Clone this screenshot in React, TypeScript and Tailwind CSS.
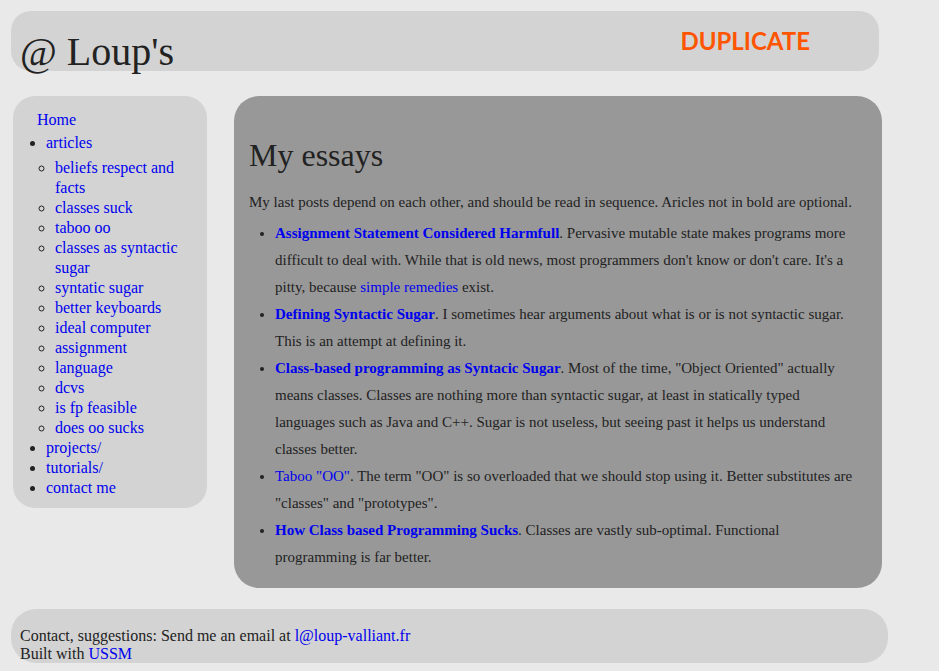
import React from "react";

const serif = { fontFamily: '"Liberation Serif", "Times New Roman", serif' };

const sub = [
  "beliefs respect and facts",
  "classes suck",
  "taboo oo",
  "classes as syntactic sugar",
  "syntatic sugar",
  "better keyboards",
  "ideal computer",
  "assignment",
  "language",
  "dcvs",
  "is fp feasible",
  "does oo sucks",
];

function A({ children, bold }: { children: React.ReactNode; bold?: boolean }) {
  return (
    <a href="#" className={"text-[#0000ee] no-underline " + (bold ? "font-bold" : "")}>
      {children}
    </a>
  );
}

export default function App() {
  return (
    <div
      className="min-h-[671px] w-full bg-[#e9e9e9] text-[#222] pt-[11px] pb-[8px]"
      style={serif}
    >
      <header className="ml-[11px] w-[868px] h-[60px] rounded-[20px] bg-[#d3d3d3] flex justify-between items-start pl-[9px] pr-[69px]">
        <h1 className="m-0 mt-[19px] text-[40px] leading-[44px] font-normal text-[#222]">@ Loup's</h1>
        <div
          className="mt-[16px] text-[24px] leading-[28px] font-bold text-[#ff5500]"
          style={{ fontFamily: 'Lato, "Open Sans", sans-serif' }}
        >
          DUPLICATE
        </div>
      </header>

      <div className="flex items-start mt-[25px]">
        <nav className="ml-[13px] w-[194px] rounded-[22px] bg-[#d3d3d3] pt-[14px] pb-[10px] text-[16px] leading-[20px]">
          <div className="ml-[24px]">
            <A>Home</A>
          </div>
          <ul className="list-disc pl-[33px] mt-[3px]">
            <li>
              <A>articles</A>
              <ul className="list-[circle] pl-[9px] mt-[5px]">
                {sub.map((s) => (
                  <li key={s}>
                    <A>{s}</A>
                  </li>
                ))}
              </ul>
            </li>
            <li>
              <A>projects/</A>
            </li>
            <li>
              <A>tutorials/</A>
            </li>
            <li>
              <A>contact me</A>
            </li>
          </ul>
        </nav>

        <main className="ml-[27px] w-[648px] rounded-[25px] bg-[#989898] pt-[20px] pl-[15px] pr-[20px] pb-[17px]">
          <h1 className="mt-[21px] mb-0 text-[32px] leading-[37px] font-normal text-[#222]">My essays</h1>
          <p className="mt-[15px] text-[15px] leading-[27px]">
            My last posts depend on each other, and should be read in sequence. Aricles not in bold are optional.
          </p>
          <ul className="list-disc pl-[26px] mt-[4px] text-[15px] leading-[27px]">
            <li>
              <A bold>Assignment Statement Considered Harmfull</A>. Pervasive mutable state makes programs more
              difficult to deal with. While that is old news, most programmers don't know or don't care. It's a
              pitty, because <A>simple remedies</A> exist.
            </li>
            <li>
              <A bold>Defining Syntactic Sugar</A>. I sometimes hear arguments about what is or is not syntactic
              sugar. This is an attempt at defining it.
            </li>
            <li>
              <A bold>Class-based programming as Syntacic Sugar</A>. Most of the time, "Object Oriented" actually
              means classes. Classes are nothing more than syntactic sugar, at least in statically typed languages
              such as Java and C++. Sugar is not useless, but seeing past it helps us understand classes better.
            </li>
            <li>
              <A>Taboo "OO"</A>. The term "OO" is so overloaded that we should stop using it. Better substitutes are
              "classes" and "prototypes".
            </li>
            <li>
              <A bold>How Class based Programming Sucks</A>. Classes are vastly sub-optimal. Functional programming
              is far better.
            </li>
          </ul>
        </main>
      </div>

      <footer className="ml-[11px] mt-[21px] w-[877px] h-[54px] rounded-[25px] bg-[#d3d3d3] pl-[9px] pt-[18px] text-[16px] leading-[18px]">
        <div>
          Contact, suggestions: Send me an email at <A>l@loup-valliant.fr</A>
        </div>
        <div>
          Built with <A>USSM</A>
        </div>
      </footer>
    </div>
  );
}
